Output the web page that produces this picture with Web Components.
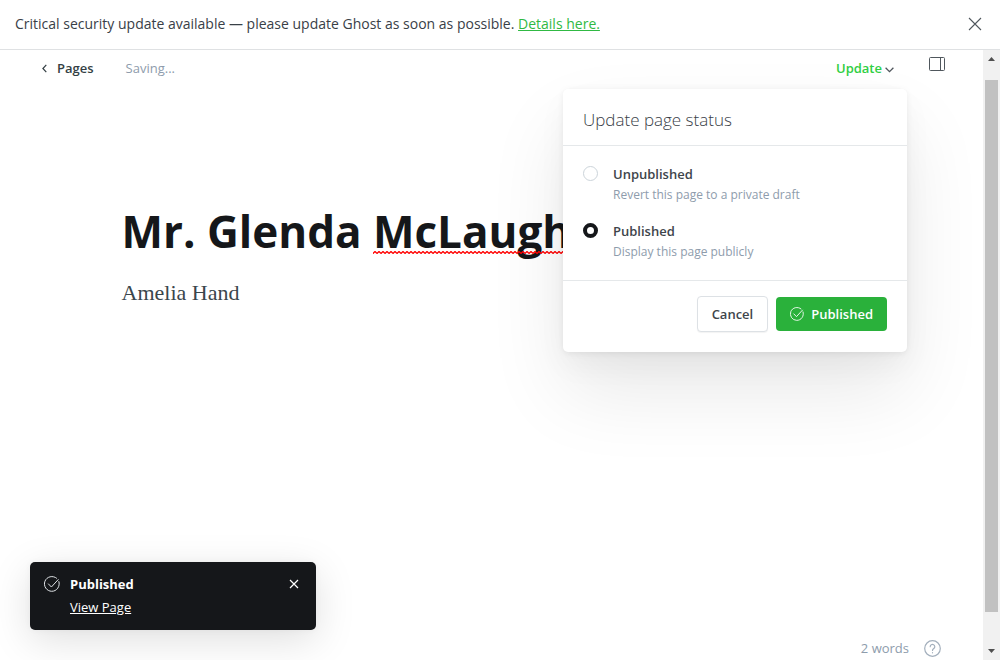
<!DOCTYPE html>
<html lang="en">
<head>
<meta charset="utf-8">
<meta name="viewport" content="width=device-width, initial-scale=1">
<title>Editor</title>
<style>
  html, body { margin: 0; }
  body { font-family: "Open Sans", "Noto Sans", sans-serif; font-size: 13px; line-height: 20px; color: #3a464c; background: #fff; }
</style>
</head>
<body>
<ghost-app></ghost-app>

<template id="t-app">
  <style>
    :host { display: flex; flex-direction: column; min-height: 100vh; }
    .workspace { flex: 1; display: flex; align-items: stretch; }
    main { flex: 1; min-width: 0; position: relative; display: flex; flex-direction: column; }
    toast-note { position: absolute; left: 30px; bottom: 30px; }
  </style>
  <alert-banner>Critical security update available — please update Ghost as soon as possible.</alert-banner>
  <div class="workspace">
    <main>
      <editor-header></editor-header>
      <page-editor></page-editor>
      <editor-footer>2 words</editor-footer>
      <toast-note><span slot="title">Published</span></toast-note>
    </main>
    <scroll-track></scroll-track>
  </div>
</template>

<template id="t-banner">
  <style>
    :host { display: flex; align-items: center; justify-content: space-between; box-sizing: border-box; min-height: 50px; padding: 0 18px 2px 15px; border-bottom: 1px solid #dfe1e3; font-size: 14px; color: #394047; }
    a { color: #30b943; text-decoration: underline; }
    button { display: flex; padding: 0; border: 0; background: none; color: #50575d; }
  </style>
  <span><slot></slot> <a href="#details">Details here.</a></span>
  <button aria-label="Close alert"><svg width="14" height="14" viewBox="0 0 14 14" fill="none" stroke="currentColor" stroke-width="1.1"><path d="M1 1l12 12M13 1L1 13"/></svg></button>
</template>

<template id="t-header">
  <style>
    :host { display: flex; align-items: center; justify-content: space-between; padding: 7px 38px 0 42px; position: relative; z-index: 2; }
    nav, .actions { display: flex; align-items: center; }
    a { display: flex; align-items: center; gap: 10px; color: #343f44; font-weight: 600; text-decoration: none; }
    .status { margin-left: 32px; color: #8e9cac; }
    .publish { position: relative; margin-right: 35px; }
    .trigger { display: flex; align-items: center; gap: 3px; padding: 0; border: 0; background: none; font: inherit; font-weight: 600; color: #30cf43; }
    .trigger svg { color: #50575d; margin-top: 4px; }
    .side { display: flex; padding: 0; border: 0; background: none; color: #50575d; margin-bottom: 8px; }
    publish-menu { position: absolute; top: 31px; right: -13px; }
  </style>
  <nav>
    <a href="#pages"><svg width="5" height="9" viewBox="0 0 5 9" fill="none" stroke="currentColor" stroke-width="1.2"><path d="M4.3.8L.9 4.5l3.4 3.7"/></svg>Pages</a>
    <span class="status">Saving...</span>
  </nav>
  <div class="actions">
    <div class="publish">
      <button class="trigger" aria-expanded="true">Update<svg width="9" height="6" viewBox="0 0 9 6" fill="none" stroke="currentColor" stroke-width="1.3"><path d="M.6.8l3.9 3.9L8.4.8"/></svg></button>
      <publish-menu></publish-menu>
    </div>
    <button class="side" aria-label="Settings"><svg width="16" height="14" viewBox="0 0 16 14" fill="none" stroke="currentColor"><rect x=".5" y=".5" width="15" height="13" rx="1"/><path d="M11.5.5v13"/></svg></button>
  </div>
</template>

<template id="t-menu">
  <style>
    :host { display: block; width: 344px; border-radius: 5px; background: #fff; box-shadow: 0 0 7px rgba(0,0,0,.04), 0 3px 6px rgba(0,0,0,.03), 0 40px 80px rgba(0,0,0,.09), 0 14px 30px rgba(0,0,0,.04); }
    h2 { margin: 0; padding: 19px 20px 13px; border-bottom: 1px solid #e5e8ea; font-size: 17px; line-height: 24px; font-weight: 300; color: #394047; }
    .choices { display: flex; flex-direction: column; gap: 16px; padding: 18px 20px; }
    footer { display: flex; align-items: center; justify-content: flex-end; gap: 8px; padding: 15px 20px 20px; border-top: 1px solid #e5e8ea; }
    button { display: flex; align-items: center; justify-content: center; box-sizing: border-box; border-radius: 4px; font: inherit; font-weight: 600; }
    .cancel { height: 36px; padding: 0 14px; border: 1px solid #dde1e5; background: #fff; color: #3e454b; box-shadow: 0 1px 1px rgba(0,0,0,.05); }
    .save { height: 34px; gap: 7px; padding: 0 14px; border: 0; background: #2ab13b; color: #fff; }
  </style>
  <h2>Update page status</h2>
  <div class="choices">
    <status-option>Unpublished<span slot="hint">Revert this page to a private draft</span></status-option>
    <status-option checked>Published<span slot="hint">Display this page publicly</span></status-option>
  </div>
  <footer>
    <button class="cancel">Cancel</button>
    <button class="save"><check-mark></check-mark>Published</button>
  </footer>
</template>

<template id="t-option">
  <style>
    :host { display: block; }
    label { display: flex; align-items: flex-start; gap: 15px; }
    input { appearance: none; box-sizing: border-box; flex: none; width: 15px; height: 15px; margin: 2px 0 0; border: 1px solid #ccd4da; border-radius: 50%; background: #fff; }
    input:checked { border: 4px solid #15171a; }
    .text { display: flex; flex-direction: column; }
    b { font-weight: 600; color: #3e454b; line-height: 20px; }
    .hint { font-size: 12px; line-height: 21px; color: #8e9cac; }
  </style>
  <label><input type="radio" name="status"><span class="text"><b><slot></slot></b><span class="hint"><slot name="hint"></slot></span></span></label>
</template>

<template id="t-check">
  <style>:host { display: inline-flex; width: 14px; height: 14px; } svg { width: 100%; height: 100%; }</style>
  <svg viewBox="0 0 16 16" fill="none" stroke="currentColor" stroke-linecap="round" stroke-linejoin="round"><path d="M14.9 5.6A7.4 7.4 0 1 1 12.6 2.2"/><path d="M4.4 7.9l3 3.1 6.8-7.4"/></svg>
</template>

<template id="t-editor">
  <style>
    :host { flex: 1; display: block; padding: 115px 24px 0; }
    article { max-width: 740px; margin: 0 auto; }
    h1 { margin: 0; font-size: 44px; line-height: 74px; font-weight: 700; color: #15171a; outline: 0; white-space: nowrap; }
    .misspelt { position: relative; }
    .misspelt::after { content: ""; position: absolute; left: 0; right: 0; bottom: 7px; height: 3px; background: url("data:image/svg+xml,%3Csvg xmlns='http://www.w3.org/2000/svg' width='4' height='3'%3E%3Cpath d='M-1 2.5L0 2.5L2 .5L4 2.5' fill='none' stroke='red' stroke-width='1.3'/%3E%3C/svg%3E") repeat-x; }
    p { margin: 9px 0 0; font-family: "Liberation Serif", serif; font-size: 22px; line-height: 32px; color: #3a464c; outline: 0; }
  </style>
  <article>
    <h1 contenteditable="true" spellcheck="false">Mr. Glenda <span class="misspelt">McLaugh</span></h1>
    <p contenteditable="true" spellcheck="false">Amelia Hand</p>
  </article>
</template>

<template id="t-footer">
  <style>
    :host { display: flex; align-items: center; justify-content: flex-end; gap: 15px; padding: 0 42px 2px; color: #8e9cac; }
    a { display: flex; color: #a3afbc; }
  </style>
  <span><slot></slot></span>
  <a href="#help" aria-label="Help"><svg width="17" height="17" viewBox="0 0 17 17" fill="none" stroke="currentColor" stroke-width="1.2" stroke-linecap="round"><circle cx="8.5" cy="8.5" r="7.8"/><path d="M6.2 6.7a2.3 2.3 0 1 1 3.6 1.900c-.9.6-1.300.9-1.300 1.900M8.500 12.600v.2"/></svg></a>
</template>

<template id="t-toast">
  <style>
    :host { display: flex; align-items: flex-start; box-sizing: border-box; width: 286px; padding: 12px 17px 13px 14px; border-radius: 5px; background: #15171a; color: #fff; box-shadow: 0 0 7px rgba(0,0,0,.04), 0 10px 40px rgba(0,0,0,.13); }
    check-mark { width: 16px; height: 16px; margin: 2px 10px 0 0; color: #dfe3e6; }
    .text { flex: 1; display: flex; flex-direction: column; align-items: flex-start; gap: 3px; }
    b { font-weight: 700; }
    a { color: #fff; }
    button { display: flex; margin-top: 5px; padding: 0; border: 0; background: none; color: #fff; }
  </style>
  <check-mark></check-mark>
  <div class="text"><b><slot name="title"></slot></b><a href="#view">View Page</a></div>
  <button aria-label="Dismiss"><svg width="10" height="10" viewBox="0 0 10 10" fill="none" stroke="currentColor" stroke-width="1.2"><path d="M1 1l8 8M9 1L1 9"/></svg></button>
</template>

<template id="t-scroll">
  <style>
    :host { display: flex; flex-direction: column; align-items: center; width: 17px; flex: none; background: #f1f1f1; color: #505050; }
    svg { display: block; flex: none; }
    .thumb { width: 13px; flex: 532; background: #c1c1c1; margin-top: 13px; }
    .rest { flex: 31; }
  </style>
  <svg width="17" height="17" viewBox="0 0 17 17" fill="currentColor"><path d="M5 11l3.500-4 3.500 4z"/></svg>
  <div class="thumb"></div><div class="rest"></div>
  <svg width="17" height="17" viewBox="0 0 17 17" fill="currentColor"><path d="M5 6l3.500 4L12 6z"/></svg>
</template>

<script>
  function define(name, templateId, setup) {
    customElements.define(name, class extends HTMLElement {
      constructor() {
        super();
        this.attachShadow({ mode: "open" }).append(document.getElementById(templateId).content.cloneNode(true));
      }
      connectedCallback() { if (setup) setup(this); }
    });
  }
  define("check-mark", "t-check");
  define("status-option", "t-option", el => {
    el.shadowRoot.querySelector("input").checked = el.hasAttribute("checked");
  });
  define("publish-menu", "t-menu", el => {
    const options = [...el.shadowRoot.querySelectorAll("status-option")];
    options.forEach(option => option.shadowRoot.addEventListener("change", () => {
      options.forEach(other => { other.shadowRoot.querySelector("input").checked = other === option; });
    }));
  });
  define("alert-banner", "t-banner");
  define("editor-header", "t-header");
  define("page-editor", "t-editor");
  define("editor-footer", "t-footer");
  define("toast-note", "t-toast");
  define("scroll-track", "t-scroll");
  define("ghost-app", "t-app");
</script>
</body>
</html>
